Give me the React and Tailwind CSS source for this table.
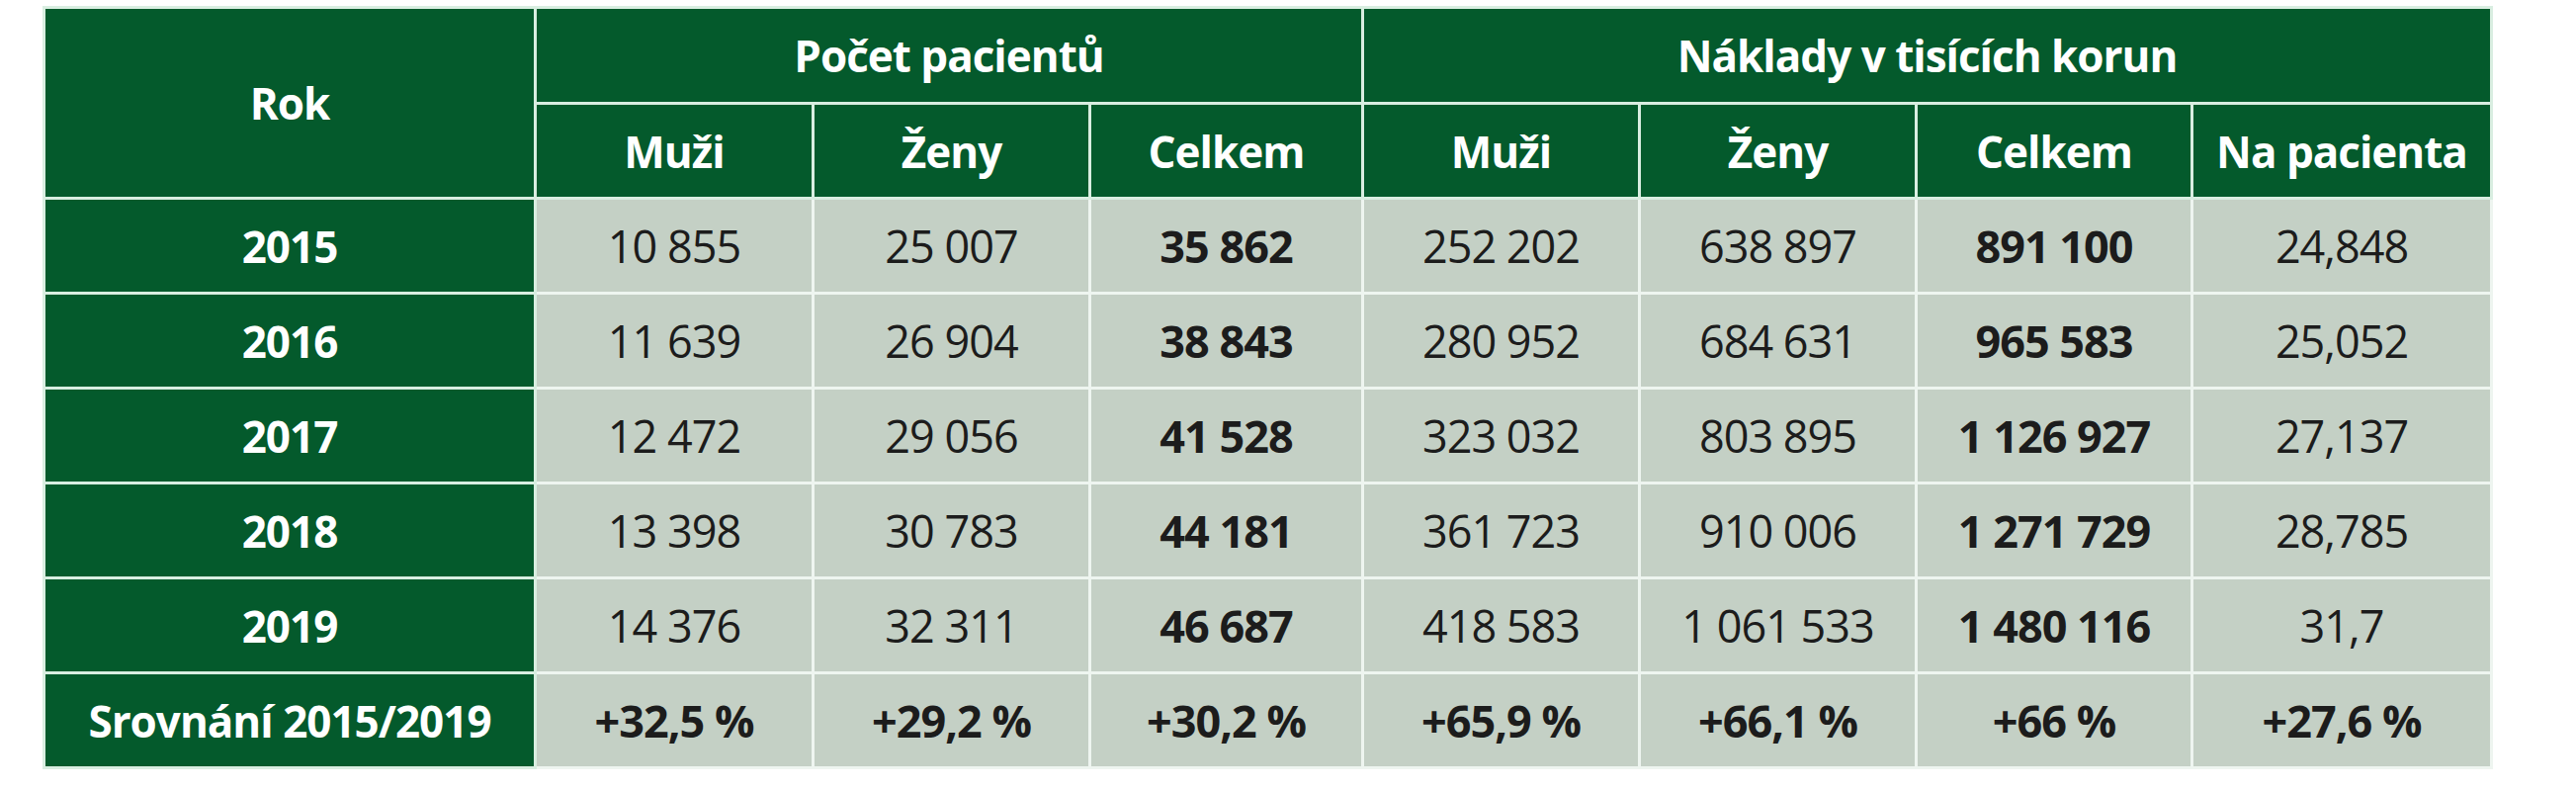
const pacienti = [
  { rok: '2015', muzi: '10 855', zeny: '25 007', celkem: '35 862', nMuzi: '252 202', nZeny: '638 897', nCelkem: '891 100', naPac: '24,848' },
  { rok: '2016', muzi: '11 639', zeny: '26 904', celkem: '38 843', nMuzi: '280 952', nZeny: '684 631', nCelkem: '965 583', naPac: '25,052' },
  { rok: '2017', muzi: '12 472', zeny: '29 056', celkem: '41 528', nMuzi: '323 032', nZeny: '803 895', nCelkem: '1 126 927', naPac: '27,137' },
  { rok: '2018', muzi: '13 398', zeny: '30 783', celkem: '44 181', nMuzi: '361 723', nZeny: '910 006', nCelkem: '1 271 729', naPac: '28,785' },
  { rok: '2019', muzi: '14 376', zeny: '32 311', celkem: '46 687', nMuzi: '418 583', nZeny: '1 061 533', nCelkem: '1 480 116', naPac: '31,7' },
]

const srovnani = ['+32,5 %', '+29,2 %', '+30,2 %', '+65,9 %', '+66,1 %', '+66 %', '+27,6 %']

// hlavička i první sloupec – tmavě zelené, bílý tučný text
const th = 'bg-[#045a2c] text-white font-bold text-[44px] tracking-[-1px] border-[3px] border-[#d9eee1] text-center align-middle'
const td = 'bg-[#c4d0c5] text-[#1c1c1c] text-[45px] tracking-[-1px] border-[3px] border-[#eef5f0] text-center align-middle'

export default function App() {
  return (
    <div className="w-[2606px] h-[800px] bg-white pt-[6px] pl-[43px]" style={{ fontFamily: '"Open Sans", "Noto Sans", sans-serif' }}>
      <table className="border-collapse table-fixed w-[2476px]">
        <colgroup>
          <col className="w-[497px]" />
          <col className="w-[281px]" />
          <col className="w-[280px]" />
          <col className="w-[276px]" />
          <col className="w-[280px]" />
          <col className="w-[280px]" />
          <col className="w-[279px]" />
          <col className="w-[303px]" />
        </colgroup>
        <thead>
          <tr className="h-[97px]">
            <th rowSpan={2} className={th}>Rok</th>
            <th colSpan={3} className={th}>Počet pacientů</th>
            <th colSpan={4} className={th}>Náklady v tisících korun</th>
          </tr>
          <tr className="h-[96px]">
            <th className={th}>Muži</th>
            <th className={th}>Ženy</th>
            <th className={th}>Celkem</th>
            <th className={th}>Muži</th>
            <th className={th}>Ženy</th>
            <th className={th}>Celkem</th>
            <th className={th}>Na pacienta</th>
          </tr>
        </thead>
        <tbody>
          {pacienti.map(r => (
            <tr key={r.rok} className="h-[96px]">
              <th className={th}>{r.rok}</th>
              <td className={td}>{r.muzi}</td>
              <td className={td}>{r.zeny}</td>
              <td className={`${td} font-bold`}>{r.celkem}</td>
              <td className={td}>{r.nMuzi}</td>
              <td className={td}>{r.nZeny}</td>
              <td className={`${td} font-bold`}>{r.nCelkem}</td>
              <td className={td}>{r.naPac}</td>
            </tr>
          ))}
          <tr className="h-[96px]">
            <th className={th}>Srovnání 2015/2019</th>
            {srovnani.map((v, i) => (
              <td key={i} className={`${td} font-bold`}>{v}</td>
            ))}
          </tr>
        </tbody>
      </table>
    </div>
  )
}
